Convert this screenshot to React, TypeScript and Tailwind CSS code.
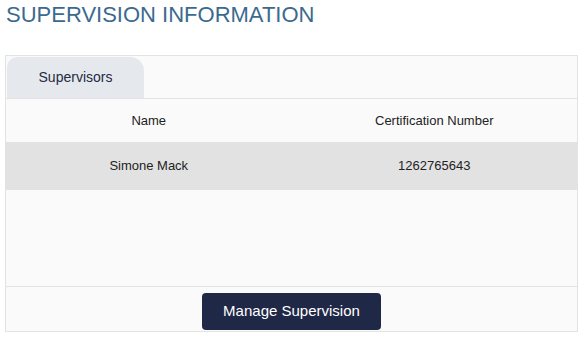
export default function App() {
  return (
    <div className="w-[584px] h-[340px] bg-white font-['Liberation_Sans',Arial,sans-serif] overflow-hidden">
      <h1 className="pl-[6px] pt-[2px] text-[22px] leading-[26px] text-[#3c6a8e]">
        SUPERVISION INFORMATION
      </h1>

      <div className="ml-[5px] mt-[27px] w-[573px] border border-[#e3e3e3] bg-[#fafafa]">
        {/* Tabs */}
        <div className="flex pt-[1px] border-b border-[#e3e3e3]">
          <div className="w-[137px] h-[41px] ml-[1px] rounded-tl-[10px] rounded-tr-[14px] bg-[#e5e9ee] flex items-center justify-center text-[14px] text-[#1f2a44]">
            Supervisors
          </div>
        </div>

        {/* Table */}
        <div className="grid grid-cols-2 h-[43px] items-center text-center text-[13px] text-[#222]">
          <div>Name</div>
          <div>Certification Number</div>
        </div>
        <div className="grid grid-cols-2 h-[48px] items-center text-center text-[13px] text-[#222] bg-[#e2e2e2]">
          <div>Simone Mack</div>
          <div>1262765643</div>
        </div>
        <div className="h-[96px]" />

        {/* Footer */}
        <div className="border-t border-[#e3e3e3] flex justify-center pt-[6px] pb-[1px]">
          <button className="w-[179px] h-[37px] rounded-[4px] bg-[#1f2846] text-white text-[15px]">
            Manage Supervision
          </button>
        </div>
      </div>
    </div>
  );
}
